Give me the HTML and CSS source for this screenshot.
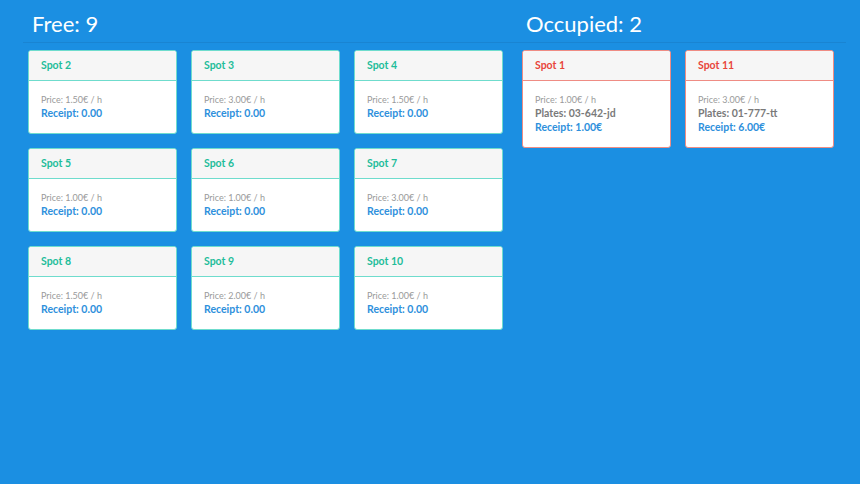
FILE: index.html
```html
<!DOCTYPE html>
<html>
<head>
<meta charset="utf-8">
<link rel="stylesheet" href="styles.css">
</head>
<body>
<div class="page">
  <section class="col col-free">
    <h1 class="col-title">Free: 9</h1>
    <div class="grid">
      <div class="card free"><div class="card-head">Spot 2</div><div class="card-body"><div class="price">Price: 1.50€ / h</div><div class="receipt">Receipt: 0.00</div></div></div>
      <div class="card free"><div class="card-head">Spot 3</div><div class="card-body"><div class="price">Price: 3.00€ / h</div><div class="receipt">Receipt: 0.00</div></div></div>
      <div class="card free"><div class="card-head">Spot 4</div><div class="card-body"><div class="price">Price: 1.50€ / h</div><div class="receipt">Receipt: 0.00</div></div></div>
      <div class="card free"><div class="card-head">Spot 5</div><div class="card-body"><div class="price">Price: 1.00€ / h</div><div class="receipt">Receipt: 0.00</div></div></div>
      <div class="card free"><div class="card-head">Spot 6</div><div class="card-body"><div class="price">Price: 1.00€ / h</div><div class="receipt">Receipt: 0.00</div></div></div>
      <div class="card free"><div class="card-head">Spot 7</div><div class="card-body"><div class="price">Price: 3.00€ / h</div><div class="receipt">Receipt: 0.00</div></div></div>
      <div class="card free"><div class="card-head">Spot 8</div><div class="card-body"><div class="price">Price: 1.50€ / h</div><div class="receipt">Receipt: 0.00</div></div></div>
      <div class="card free"><div class="card-head">Spot 9</div><div class="card-body"><div class="price">Price: 2.00€ / h</div><div class="receipt">Receipt: 0.00</div></div></div>
      <div class="card free"><div class="card-head">Spot 10</div><div class="card-body"><div class="price">Price: 1.00€ / h</div><div class="receipt">Receipt: 0.00</div></div></div>
    </div>
  </section>
  <section class="col col-occ">
    <h1 class="col-title">Occupied: 2</h1>
    <div class="grid grid-occ">
      <div class="card occ"><div class="card-head">Spot 1</div><div class="card-body"><div class="price">Price: 1.00€ / h</div><div class="plates">Plates: 03-642-jd</div><div class="receipt">Receipt: 1.00€</div></div></div>
      <div class="card occ"><div class="card-head">Spot 11</div><div class="card-body"><div class="price">Price: 3.00€ / h</div><div class="plates">Plates: 01-777-tt</div><div class="receipt">Receipt: 6.00€</div></div></div>
    </div>
  </section>
</div>
</body>
</html>
```
FILE: styles.css
```css
html, body {
  margin: 0;
  padding: 0;
  background: #1b8fe2;
  font-family: Lato, "Open Sans", sans-serif;
}
.page {
  display: flex;
  align-items: flex-start;
  padding: 0 14px 0 23px;
}
.col-free {
  flex: 0 0 494px;
}
.col-occ {
  flex: 1 1 auto;
  min-width: 0;
}
.col-title {
  margin: 0;
  padding: 8px 0 2px 9px;
  font-size: 22px;
  line-height: 32px;
  font-weight: 400;
  color: #fff;
  border-bottom: 1px solid rgba(0, 0, 0, 0.07);
}
.grid {
  display: grid;
  grid-template-columns: repeat(3, 149px);
  column-gap: 14px;
  row-gap: 14px;
  padding: 7px 0 0 5px;
}
.grid-occ {
  grid-template-columns: repeat(2, 149px);
}
.card {
  background: #fff;
  border: 1px solid #6fdccd;
  border-radius: 3px;
  overflow: hidden;
}
.card.occ { border-color: #ef8c84; }
.card-head {
  background: #f6f6f6;
  height: 29px;
  line-height: 29px;
  padding-left: 12px;
  font-size: 10.5px;
  font-weight: 700;
  color: #1fbd9a;
  border-bottom: 1px solid #6fdccd;
}
.card.occ .card-head {
  color: #e8453a;
  border-bottom-color: #ef8c84;
}
.card-body {
  padding: 13px 12px 13px;
}
.price {
  font-size: 9px;
  line-height: 12px;
  color: #9a9a9a;
}
.plates {
  font-size: 10.5px;
  line-height: 14px;
  font-weight: 700;
  color: #7a7a7a;
}
.receipt {
  font-size: 10.5px;
  line-height: 14px;
  font-weight: 700;
  color: #2e90dc;
}
```
